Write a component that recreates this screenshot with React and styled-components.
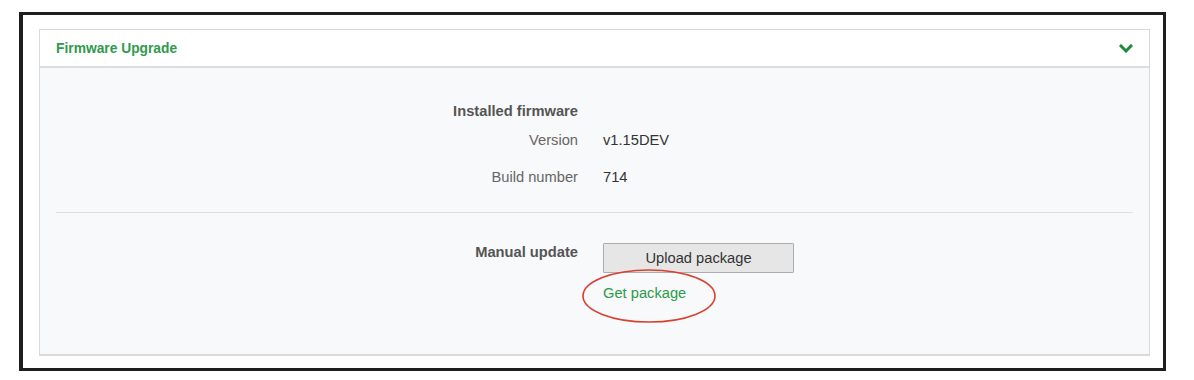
import styled, { createGlobalStyle } from "styled-components";

const GlobalStyle = createGlobalStyle`
  body {
    margin: 0;
    background: #ffffff;
    font-family: "Liberation Sans", Arial, sans-serif;
  }
`;

const Frame = styled.div`
  box-sizing: border-box;
  margin: 12px 0 0 19px;
  width: 1147px;
  height: 359px;
  border: 3px solid #1e1e1e;
  border-left-width: 4px;
  padding: 14px 13px 12px 16px;
`;

const Panel = styled.section`
  box-sizing: border-box;
  height: 100%;
  border: 1px solid #dadada;
  border-bottom-width: 2px;
  display: flex;
  flex-direction: column;
`;

const Header = styled.header`
  height: 36px;
  display: flex;
  align-items: center;
  justify-content: space-between;
  padding: 0 16px;
  background: #fff;
  border-bottom: 2px solid #dddddd;
  color: #2f9a4d;
  font-size: 13.8px;
  font-weight: bold;
`;

const Body = styled.div`
  flex: 1;
  background: #f8f9fa;
  padding-top: 33px;
`;

const Row = styled.div`
  display: grid;
  grid-template-columns: 538px 1fr;
  column-gap: 25px;
  min-height: ${(p) => p.$height || 37}px;
  font-size: 14.7px;
  line-height: 20px;
`;

const Label = styled.div`
  text-align: right;
  color: ${(p) => (p.$strong ? "#555" : "#666")};
  font-weight: ${(p) => (p.$strong ? "bold" : "normal")};
`;

const Value = styled.div`
  color: #333;
  display: flex;
  flex-direction: column;
  align-items: flex-start;
`;

const Divider = styled.hr`
  margin: 8px 16px 29px;
  border: 0;
  border-top: 1px solid #dedede;
`;

const Button = styled.button`
  width: 191px;
  height: 30px;
  margin-top: 1px;
  background: #e6e6e6;
  border: 1px solid #adadad;
  border-radius: 1px;
  color: #333;
  font-family: "Liberation Sans", Arial, sans-serif;
  font-size: 14.7px;
`;

const LinkWrap = styled.span`
  position: relative;
  margin-top: 10px;
`;

const Link = styled.a`
  color: #2c9a4a;
  text-decoration: none;
  font-size: 14.7px;
`;

const Circle = styled.svg`
  position: absolute;
  left: -21px;
  top: -14px;
  overflow: visible;
  pointer-events: none;
`;

const Chevron = () => (
  <svg width="14" height="9" viewBox="0 0 14 9">
    <polyline
      points="2,2 7,7 12,2"
      fill="none"
      stroke="#1f8a3e"
      strokeWidth="3"
      strokeLinecap="square"
    />
  </svg>
);

export default function App() {
  return (
    <>
      <GlobalStyle />
      <Frame>
        <Panel>
          <Header>
            <span>Firmware Upgrade</span>
            <Chevron />
          </Header>
          <Body>
            <Row $height={29}>
              <Label $strong>Installed firmware</Label>
              <Value />
            </Row>
            <Row>
              <Label>Version</Label>
              <Value>v1.15DEV</Value>
            </Row>
            <Row>
              <Label>Build number</Label>
              <Value>714</Value>
            </Row>
            <Divider />
            <Row>
              <Label $strong>Manual update</Label>
              <Value>
                <Button>Upload package</Button>
                <LinkWrap>
                  <Link href="#">Get package</Link>
                  <Circle width="134" height="54">
                    <ellipse
                      cx="67"
                      cy="27"
                      rx="66"
                      ry="26"
                      fill="none"
                      stroke="#d8412f"
                      strokeWidth="1.6"
                    />
                  </Circle>
                </LinkWrap>
              </Value>
            </Row>
          </Body>
        </Panel>
      </Frame>
    </>
  );
}
